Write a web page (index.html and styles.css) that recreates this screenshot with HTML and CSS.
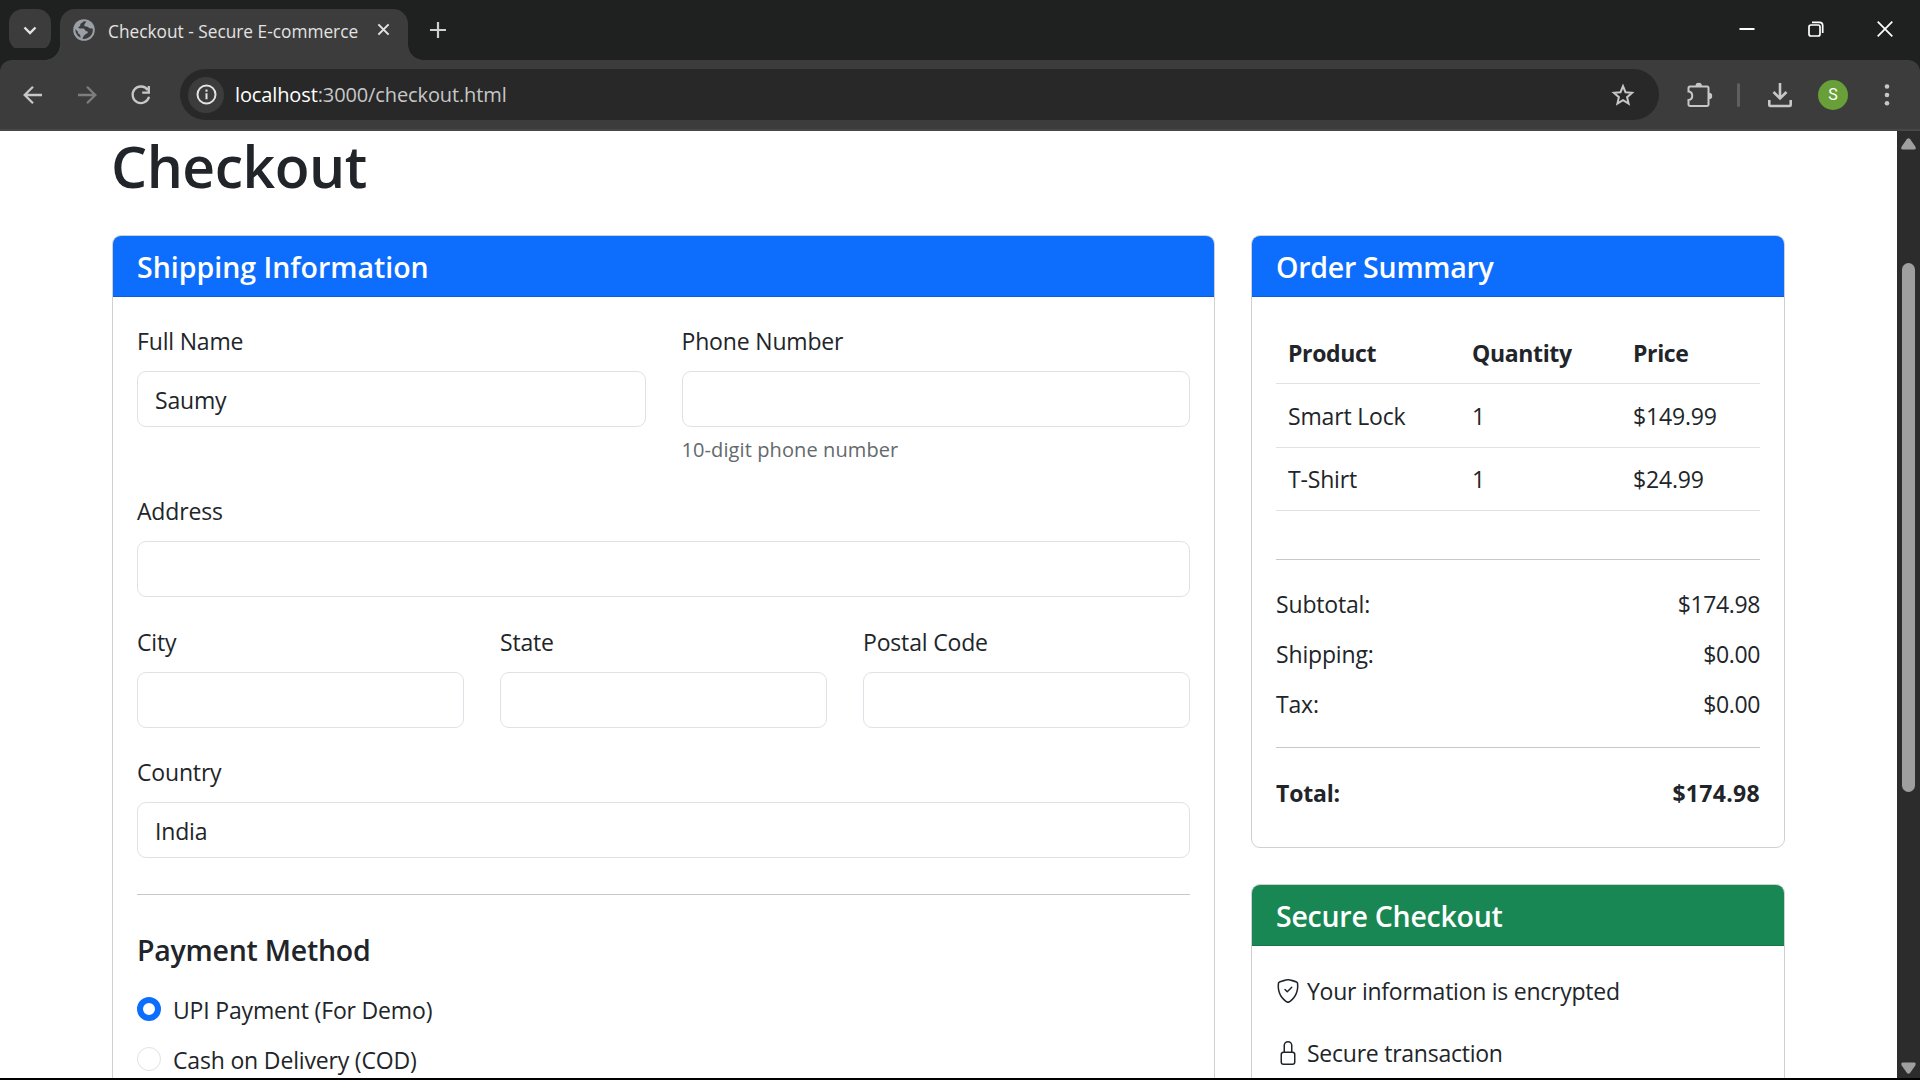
FILE: index.html
```html
<!DOCTYPE html>
<html lang="en">
<head>
<meta charset="utf-8">
<title>Checkout - Secure E-commerce</title>
<link rel="stylesheet" href="styles.css">
</head>
<body>
<div class="window">
  <header class="tabstrip">
    <div class="tab-search"><svg width="42" height="42" viewBox="0 0 42 42" fill="none" stroke="#e3e3e3" stroke-width="2.4"><path d="M15.5 18.5l5.5 5.5 5.5-5.5"/></svg></div>
    <div class="tab">
      <svg class="globe" width="22" height="22" viewBox="0 0 22 22"><circle cx="11" cy="11" r="10.8" fill="#9aa0a6"/><path d="M10.500 2.200c-.5 1.600-3.200 1.700-3.200 3.600 0 1.600-1 1.700-2 2.500 0 1.500 2.500 1.200 4.700 1.200 2 0 1.700 2.700 3.700 2.700 1.600 0 1.500 2-.3 2.600-2 .6-2.700 2.200-3.900 5A9 9 0 0 0 19.700 9.500c-1.300.3-3.700-.1-4.500-1.300-.8-1.100-2.900-.3-3.700-1.200-.9-1 .6-2.700 2-4.400zM2.300 10.300c0 3.700 2 7 5.200 8.400-.2-2-.1-3.200-1.600-3.700-1.300-.5-.7-2-1.500-3z" fill="#3c3c3c"/></svg>
      <span class="tab-title">Checkout - Secure E-commerce</span>
      <svg class="tab-close" width="13" height="13" viewBox="0 0 14 14" stroke="#e3e3e3" stroke-width="2.2"><path d="M1.500 1.500l11 11M12.500 1.500l-11 11"/></svg>
    </div>
    <svg class="new-tab" width="18" height="18" viewBox="0 0 18 18" stroke="#d0d0d0" stroke-width="2.2"><path d="M9 1v16M1 9h16"/></svg>
    <div class="window-controls">
      <svg width="16" height="16" viewBox="0 0 16 16" stroke="#fff" stroke-width="2"><path d="M.5 8h15"/></svg>
      <svg width="16" height="16" viewBox="0 0 16 16" fill="none" stroke="#fff" stroke-width="1.700"><rect x="1" y="4" width="11" height="11" rx="2"/><path d="M4 1.300h7.500a3.200 3.200 0 0 1 3.200 3.200V12"/></svg>
      <svg width="16" height="16" viewBox="0 0 16 16" stroke="#fff" stroke-width="1.700"><path d="M.7.7l14.600 14.600M15.300.7L.7 15.300"/></svg>
    </div>
  </header>
  <div class="toolbar">
    <svg class="nav" width="24" height="24" viewBox="0 0 24 24" fill="none" stroke="#c7c7c7" stroke-width="2.300"><path d="M21 12H4.500M12 3.700L3.700 12l8.300 8.300"/></svg>
    <svg class="nav" width="24" height="24" viewBox="0 0 24 24" fill="none" stroke="#7d7d7d" stroke-width="2.300"><path d="M3 12h16.500M12 3.700l8.300 8.300-8.300 8.300"/></svg>
    <svg class="nav" width="24" height="24" viewBox="0 0 24 24" fill="none" stroke="#c7c7c7" stroke-width="2.300"><path d="M18.700 7A8.300 8.300 0 1 0 20 13.700M19.800 3v6.700h-6.600"/></svg>
    <div class="omnibox">
      <span class="site-info"><svg width="21" height="21" viewBox="0 0 21 21" fill="none" stroke="#e3e3e3" stroke-width="2"><circle cx="10.500" cy="10.500" r="9"/><path d="M10.500 9.300v6M10.500 5.500v2.200"/></svg></span>
      <span class="url"><b>localhost</b>:3000/checkout.html</span>
      <svg class="star" width="24" height="24" viewBox="0 0 24 24" fill="none" stroke="#c7c7c7" stroke-width="2"><path d="M12 3.200l2.500 6 6.600.6-5 4.400 1.500 6.400-5.600-3.400-5.600 3.400 1.500-6.400-5-4.400 6.600-.6z"/></svg>
    </div>
    <svg class="ext" width="28" height="28" viewBox="0 0 28 28"><path d="M5 5.500h17a1.500 1.500 0 0 1 1.500 1.500v16.500a1.500 1.500 0 0 1-1.500 1.500H5a1.500 1.500 0 0 1-1.500-1.500V19c5-.5 5-8 0-8.500V7A1.500 1.500 0 0 1 5 5.500z" fill="none" stroke="#c7c7c7" stroke-width="2"/><path d="M10.500 5a3.200 3.200 0 0 1 6.400 0zM24 11.800a3.200 3.200 0 0 1 0 6.400z" fill="#c7c7c7"/></svg>
    <span class="divider"></span>
    <svg class="dl" width="26" height="26" viewBox="0 0 26 26" fill="none" stroke="#c7c7c7" stroke-width="2.600"><path d="M13 1v15M6.500 10l6.500 6.500 6.500-6.500M2.300 18v5a1 1 0 0 0 1 1h19.400a1 1 0 0 0 1-1v-5"/></svg>
    <span class="avatar">S</span>
    <svg class="menu" width="6" height="24" viewBox="0 0 6 24" fill="#c7c7c7"><circle cx="3" cy="3.500" r="2.300"/><circle cx="3" cy="12" r="2.300"/><circle cx="3" cy="20.300" r="2.300"/></svg>
  </div>
  <div class="viewport">
    <main class="page">
      <h1>Checkout</h1>
      <div class="columns">
        <section class="card shipping">
          <h2 class="card-header">Shipping Information</h2>
          <div class="card-body">
            <div class="row contact">
              <label class="field">Full Name<span class="input">Saumy</span></label>
              <label class="field">Phone Number<span class="input"></span><small>10-digit phone number</small></label>
            </div>
            <div class="row"><label class="field">Address<span class="input"></span></label></div>
            <div class="row locality">
              <label class="field">City<span class="input"></span></label>
              <label class="field">State<span class="input"></span></label>
              <label class="field">Postal Code<span class="input"></span></label>
            </div>
            <div class="row"><label class="field">Country<span class="input">India</span></label></div>
            <div class="rule"></div>
            <h3>Payment Method</h3>
            <div class="option"><span class="radio checked"></span>UPI Payment (For Demo)</div>
            <div class="option"><span class="radio"></span>Cash on Delivery (COD)</div>
          </div>
        </section>
        <div class="side">
          <section class="card summary">
            <h2 class="card-header">Order Summary</h2>
            <div class="card-body">
              <div class="line head"><span>Product</span><span>Quantity</span><span>Price</span></div>
              <div class="line"><span>Smart Lock</span><span>1</span><span>$149.99</span></div>
              <div class="line last"><span>T-Shirt</span><span>1</span><span>$24.99</span></div>
              <div class="rule"></div>
              <div class="amount"><span>Subtotal:</span><span class="value">$174.98</span></div>
              <div class="amount"><span>Shipping:</span><span class="value">$0.00</span></div>
              <div class="amount"><span>Tax:</span><span class="value">$0.00</span></div>
              <div class="rule"></div>
              <div class="amount total"><span>Total:</span><span class="value">$174.98</span></div>
            </div>
          </section>
          <section class="card secure">
            <h2 class="card-header">Secure Checkout</h2>
            <div class="card-body">
              <div class="assurance"><svg width="24" height="24" viewBox="0 0 16 16" fill="#212529"><path d="M5.338 1.590a61 61 0 0 0-2.837.856.480.480 0 0 0-.328.390c-.554 4.157.726 7.190 2.253 9.188a10.700 10.700 0 0 0 2.287 2.233c.346.244.652.420.893.533q.180.085.293.118a1 1 0 0 0 .101.025 1 1 0 0 0 .100-.025q.114-.034.294-.118c.240-.113.547-.290.893-.533a10.700 10.700 0 0 0 2.287-2.233c1.527-1.997 2.807-5.031 2.253-9.188a.480.480 0 0 0-.328-.390c-.651-.213-1.750-.560-2.837-.855C9.552 1.290 8.531 1.067 8 1.067c-.530 0-1.552.223-2.662.524zM5.072.560C6.157.265 7.310 0 8 0s1.843.265 2.928.560c1.110.300 2.229.655 2.887.870a1.540 1.540 0 0 1 1.044 1.262c.596 4.477-.787 7.795-2.465 9.990a11.800 11.800 0 0 1-2.517 2.453 7 7 0 0 1-1.048.625c-.280.132-.581.240-.829.240s-.548-.108-.829-.240a7 7 0 0 1-1.048-.625 11.800 11.800 0 0 1-2.517-2.453C1.928 10.487.545 7.169 1.141 2.692A1.540 1.540 0 0 1 2.185 1.430 63 63 0 0 1 5.072.560"/><path d="M10.854 5.146a.5.5 0 0 1 0 .708l-3 3a.5.5 0 0 1-.708 0l-1.500-1.500a.5.5 0 1 1 .708-.708L7.500 7.793l2.646-2.647a.5.5 0 0 1 .708 0"/></svg>Your information is encrypted</div>
              <div class="assurance"><svg width="24" height="24" viewBox="0 0 16 16" fill="#212529"><path d="M8 1a2 2 0 0 1 2 2v4H6V3a2 2 0 0 1 2-2m3 6V3a3 3 0 0 0-6 0v4a2 2 0 0 0-2 2v5a2 2 0 0 0 2 2h6a2 2 0 0 0 2-2V9a2 2 0 0 0-2-2M5 8h6a1 1 0 0 1 1 1v5a1 1 0 0 1-1 1H5a1 1 0 0 1-1-1V9a1 1 0 0 1 1-1"/></svg>Secure transaction</div>
            </div>
          </section>
        </div>
      </div>
    </main>
    <div class="scrollbar">
      <svg width="15" height="12" viewBox="0 0 15 12" fill="#9f9f9f"><path d="M5.800 1.200Q7.500-.6 9.200 1.200L14.300 8.600Q15.500 11.500 13 11.500H2Q-.5 11.500.7 8.600z"/></svg>
      <span class="thumb"></span>
      <svg class="down" width="15" height="12" viewBox="0 0 15 12" fill="#9f9f9f"><path d="M5.800 10.800Q7.500 12.600 9.200 10.800L14.300 3.400Q15.500.5 13 .5H2Q-.5.5.7 3.400z"/></svg>
    </div>
  </div>
</div>
</body>
</html>
```
FILE: styles.css
```css
* { box-sizing: border-box; }
body { margin: 0; background: #000; color: #212529; font-family: "Open Sans", "Noto Sans", sans-serif; font-size: 23px; line-height: 36px; letter-spacing: -.17px; }
h1, h2, h3 { margin: 0; font-weight: 600; }
svg { display: block; flex: none; }
.window { width: 1920px; height: 1080px; overflow: hidden; display: flex; flex-direction: column; }

.tabstrip { height: 60px; flex: none; background: #1f2120; display: flex; align-items: flex-start; padding: 9px 27px 0 9px; }
.tab-search { width: 42px; height: 42px; border-radius: 14px; background: #3c3c3c; }
.tab { position: relative; width: 348px; height: 51px; margin-left: 9px; padding: 10px 0 0 13px; border-radius: 15px 15px 0 0; background: #3c3c3c; display: flex; }
.tab::before, .tab::after { content: ""; position: absolute; bottom: 0; width: 15px; height: 15px; }
.tab::before { left: -15px; background: radial-gradient(circle at 0 0, transparent 14.500px, #3c3c3c 15px); }
.tab::after { right: -15px; background: radial-gradient(circle at 100% 0, transparent 14.500px, #3c3c3c 15px); }
.tab-title { margin: 1px 0 0 13px; width: 269px; font-size: 17.300px; line-height: 24px; color: #e3e3e3; white-space: nowrap; letter-spacing: 0; }
.tab-close { margin-top: 4px; }
.new-tab { margin: 12px 0 0 21px; }
.window-controls { margin: 12px 0 0 auto; display: flex; gap: 53px; }

.toolbar { height: 71px; flex: none; background: #3c3c3c; border-bottom: 2px solid #474747; border-radius: 12px 12px 0 0; box-shadow: 0 -12px 0 #1f2120; display: flex; align-items: center; padding: 0 30px 0 21px; }
.nav { margin-right: 30px; }
.omnibox { margin-left: -3px; width: 1479px; height: 51px; border-radius: 26px; background: #282828; display: flex; align-items: center; padding: 0 24px 0 8px; }
.site-info { width: 36px; height: 36px; border-radius: 50%; background: #3c3c3c; display: grid; place-items: center; }
.url { margin-left: 11px; font-size: 20px; color: #c7c7c7; letter-spacing: -.12px; }
.url b { font-weight: 400; color: #fff; }
.star { margin-left: auto; }
.ext { margin-left: 26px; }
.divider { width: 3px; height: 24px; margin-left: 24px; border-radius: 2px; background: #5f5f5f; }
.dl { margin-left: 27px; }
.avatar { width: 30px; height: 30px; margin-left: 25px; border-radius: 50%; background: #689f38; color: #fff; font: 16px/30px Roboto, sans-serif; text-align: center; }
.menu { margin-left: auto; }

.viewport { height: 947px; flex: none; display: flex; background: #fff; overflow: hidden; }
.page { width: 1897px; padding: 1px 112px 0; flex: none; }
.scrollbar { width: 23px; height: 947px; padding: 7px 4px 4px; background: #2c2c2c; display: flex; flex-direction: column; align-items: center; }
.thumb { width: 13px; height: 529px; margin-top: 113px; border-radius: 7px; background: #9f9f9f; }
.down { margin-top: auto; }

h1 { height: 103px; margin-left: -1px; font-size: 57px; line-height: 69px; letter-spacing: -.5px; }
.columns { display: flex; align-items: flex-start; gap: 36px; }
.card { border: 1px solid #d0d0d0; border-radius: 9px; background: #fff; overflow: hidden; }
.shipping { width: 1103px; height: 950px; }
.side { width: 534px; display: grid; gap: 36px; }
.card-header { height: 61px; padding: 13px 24px 11px; font-size: 28.500px; line-height: 36px; letter-spacing: -.25px; background: #0d6efd; color: #fff; border-bottom: 1px solid #0b5ed7; }
.shipping .card-header { letter-spacing: 0; }
.card-body { padding: 24px; }
.row { display: flex; gap: 36px; margin-bottom: 25px; }
.contact { margin-bottom: 26px; }
.locality { margin-bottom: 24px; }
.field { flex: 1; display: flex; flex-direction: column; padding-top: 2px; white-space: nowrap; }
.input { height: 56px; margin-top: 12px; padding: 10px 17px 8px; border: 1px solid #dee2e6; border-radius: 9px; }
small { margin-top: 8px; font-size: 20px; line-height: 30px; letter-spacing: .1px; color: #63696e; }
.rule { height: 1px; background: #c7c8c9; }
.shipping .rule { margin: 36px 0; }
h3 { margin-bottom: 17px; padding-top: 1px; font-size: 28.500px; line-height: 36px; letter-spacing: -.25px; }
.option { height: 50px; display: flex; align-items: center; gap: 12px; }
.radio { width: 24px; height: 24px; margin-bottom: 3px; border: 1px solid #dee2e6; border-radius: 50%; }
.radio.checked { border: 6px solid #0d6efd; }

.summary { height: 613px; }
.line { height: 64px; display: grid; grid-template-columns: 184px 161px 1fr; align-items: center; padding: 0 12px; border-bottom: 1px solid #dee2e6; }
.head, .total { font-weight: 700; }
.head { height: 63px; padding-top: 1px; letter-spacing: -.35px; }
.last { height: 63px; }
.amount { display: flex; justify-content: space-between; height: 50px; }
.value { letter-spacing: -.4px; }
.total .value { letter-spacing: .3px; }
.summary .rule { margin: 48px 0 26px; }
.summary .amount + .rule { margin: 11px 0 27px; }
.secure { height: 300px; }
.secure .card-header { background: #198754; border-color: #157347; }
.secure .card-body { padding-top: 14px; }
.assurance { display: flex; align-items: center; gap: 7px; height: 62px; letter-spacing: -.25px; }
```
